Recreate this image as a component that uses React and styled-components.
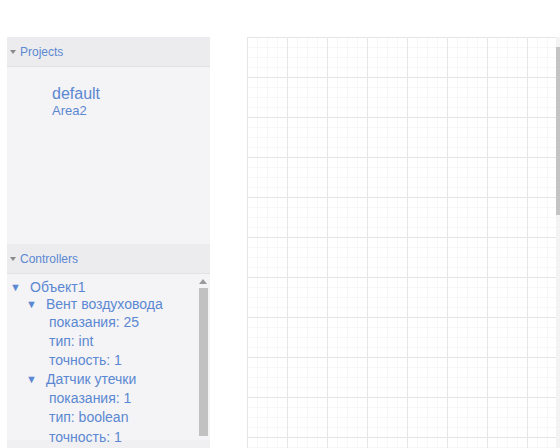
import React from "react";
import styled, { createGlobalStyle } from "styled-components";

const Global = createGlobalStyle`
  html, body { margin: 0; padding: 0; background: #fff; }
  body { font-family: "Liberation Sans", Arial, sans-serif; overflow: hidden; }
`;

const Page = styled.div`
  width: 560px;
  height: 448px;
  display: flex;
  flex-direction: column;
  overflow: hidden;
`;

const TopBar = styled.div`
  height: 37px;
  flex: none;
`;

const Main = styled.div`
  flex: 1;
  display: flex;
  min-height: 0;
`;

const Side = styled.div`
  width: 203px;
  margin-left: 7px;
  display: flex;
  flex-direction: column;
  background: #f4f3f5;
`;

const Header = styled.div`
  height: 29px;
  flex: none;
  display: flex;
  align-items: center;
  gap: 4px;
  padding-left: 3px;
  background: #ececee;
  border-bottom: 1px solid #e2e2e4;
  color: #5b88d2;
  font-size: 12px;
`;

const Caret = styled.span`
  display: inline-block;
  width: 0;
  height: 0;
  border-left: ${p => p.$s}px solid transparent;
  border-right: ${p => p.$s}px solid transparent;
  border-top: ${p => p.$s * 1.2}px solid ${p => p.$c};
`;

const ProjectsBody = styled.div`
  height: 177px;
  flex: none;
  padding: 18px 0 0 45px;
  box-sizing: border-box;
  color: #5b88d2;
`;

const ProjName = styled.div`
  font-size: 16px;
  line-height: 18px;
`;

const ProjSub = styled.div`
  font-size: 13px;
  line-height: 16px;
`;

const CtrlBody = styled.div`
  flex: 1;
  display: flex;
  min-height: 0;
  position: relative;
`;

const Tree = styled.div`
  flex: 1;
  padding-top: 5px;
  color: #5b88d2;
  font-size: 14px;
`;

const Row = styled.div`
  height: ${p => p.$h}px;
  display: flex;
  align-items: center;
  padding-left: ${p => p.$indent}px;
  white-space: nowrap;
`;

const TreeCaret = styled.span`
  flex: none;
  width: 20px;
  font-size: 11px;
  color: #5b88d2;
`;

const VScroll = styled.div`
  width: 10px;
  margin-right: 2px;
  display: flex;
  flex-direction: column;
  align-items: center;
  padding-bottom: 4px;
`;

const Arrow = styled.div`
  height: 14px;
  display: flex;
  align-items: center;
  justify-content: center;
`;

const Thumb = styled.div`
  width: 9px;
  flex: 1;
  background: #c1c1c1;
`;

const Footer = styled.div`
  height: 8px;
  flex: none;
  background: #f0eff1;
`;

const Canvas = styled.div`
  flex: 1;
  margin-left: 37px;
  position: relative;
  background-color: #fff;
  background-image:
    linear-gradient(to right, #e6e6e6 1px, transparent 1px),
    linear-gradient(to bottom, #e6e6e6 1px, transparent 1px),
    linear-gradient(to right, #f7f7f7 1px, transparent 1px),
    linear-gradient(to bottom, #f7f7f7 1px, transparent 1px);
  background-size: 40px 40px, 40px 40px, 10px 10px, 10px 10px;
`;

const CanvasScroll = styled.div`
  position: absolute;
  right: 0;
  top: 0;
  bottom: 0;
  width: 4px;
  background: #f3f3f3;
`;

const CanvasThumb = styled.div`
  margin-top: 10px;
  height: 168px;
  background: #c4c4c4;
`;

const tree = [
  { t: "Объект1", indent: 3, caret: true, h: 16 },
  { t: "Вент воздуховода", indent: 19, caret: true, h: 17 },
  { t: "показания: 25", indent: 42, h: 19 },
  { t: "тип: int", indent: 42, h: 19 },
  { t: "точность: 1", indent: 42, h: 19 },
  { t: "Датчик утечки", indent: 19, caret: true, h: 19 },
  { t: "показания: 1", indent: 42, h: 19 },
  { t: "тип: boolean", indent: 42, h: 20 },
  { t: "точность: 1", indent: 42, h: 20 },
];

export default function App() {
  return (
    <Page>
      <Global />
      <TopBar />
      <Main>
        <Side>
          <Header>
            <Caret $s={3.5} $c="#8a8a8a" />
            Projects
          </Header>
          <ProjectsBody>
            <ProjName>default</ProjName>
            <ProjSub>Area2</ProjSub>
          </ProjectsBody>
          <Header>
            <Caret $s={3.5} $c="#8a8a8a" />
            Controllers
          </Header>
          <CtrlBody>
            <Tree>
              {tree.map((r, i) => (
                <Row key={i} $indent={r.indent} $h={r.h}>
                  {r.caret && <TreeCaret>▼</TreeCaret>}
                  {r.t}
                </Row>
              ))}
            </Tree>
            <VScroll>
              <Arrow>
                <svg width="8" height="5" viewBox="0 0 8 5">
                  <path d="M4 0 L8 5 L0 5 Z" fill="#9a9a9a" />
                </svg>
              </Arrow>
              <Thumb />
            </VScroll>
          </CtrlBody>
          <Footer />
        </Side>
        <Canvas>
          <CanvasScroll>
            <CanvasThumb />
          </CanvasScroll>
        </Canvas>
      </Main>
    </Page>
  );
}
